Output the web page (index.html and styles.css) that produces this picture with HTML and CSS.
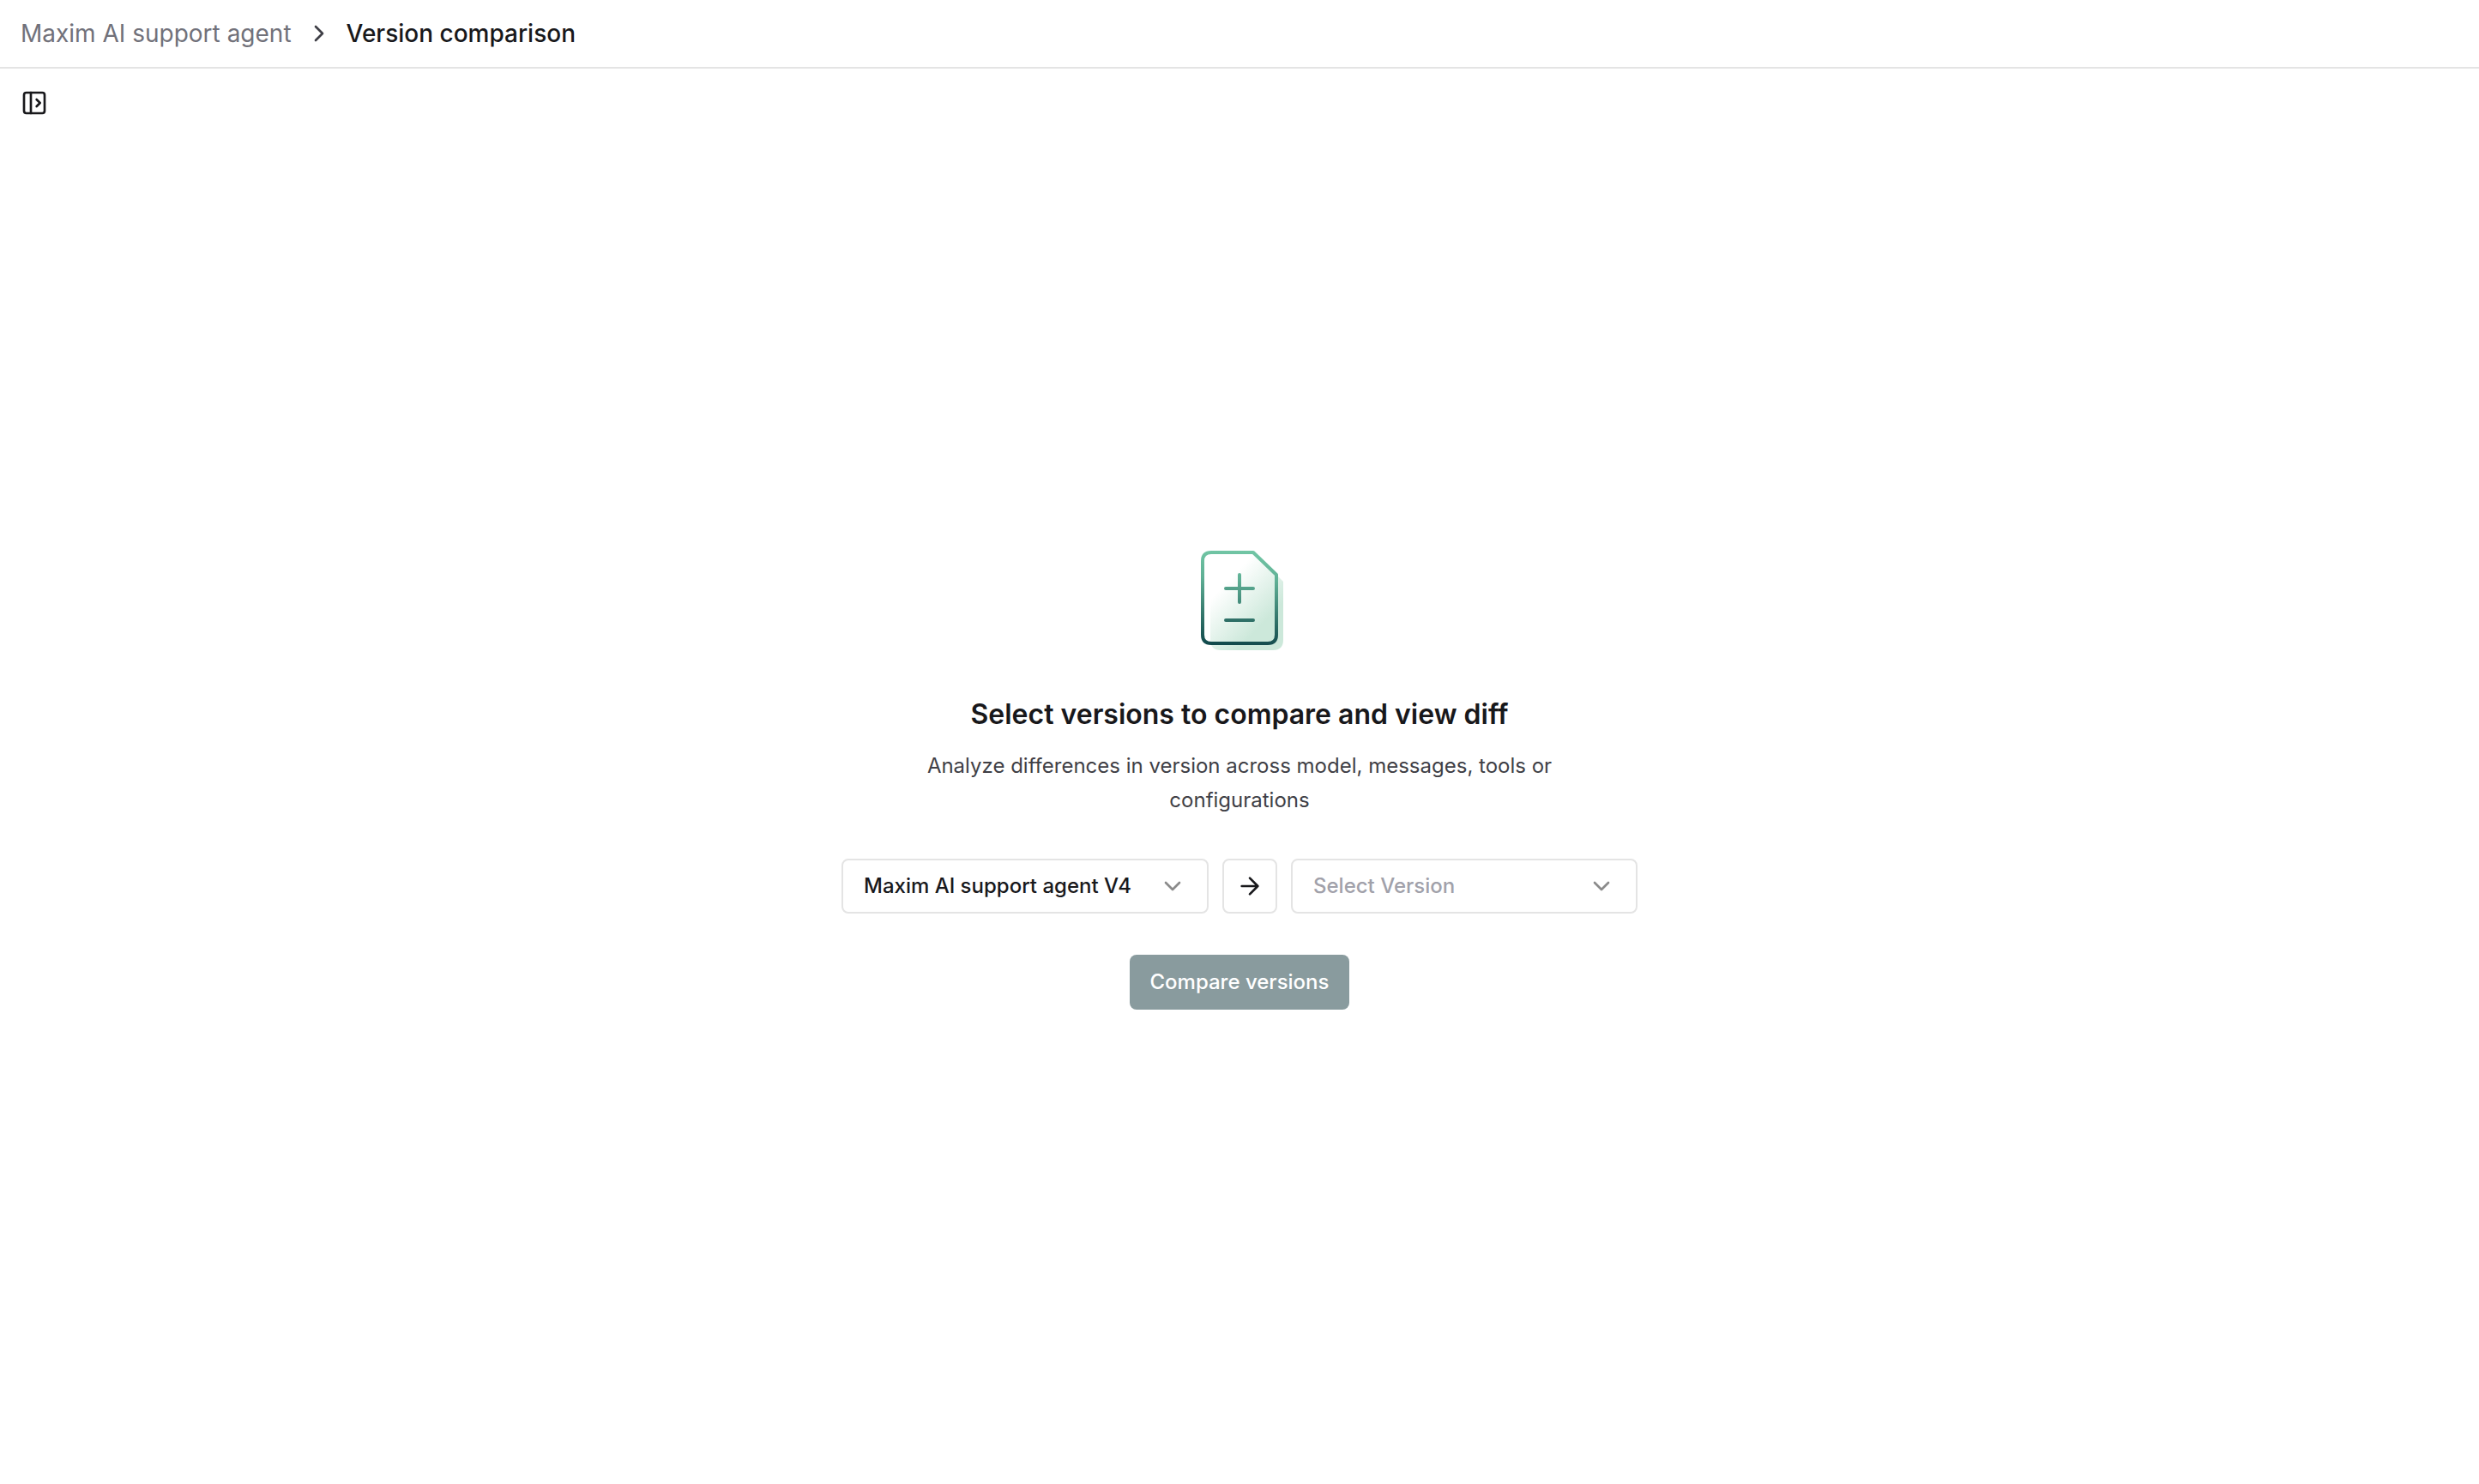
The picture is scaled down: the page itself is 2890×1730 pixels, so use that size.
FILE: index.html
```html
<!DOCTYPE html>
<html lang="en">
<head>
  <meta charset="utf-8">
  <meta name="viewport" content="width=device-width, initial-scale=1">
  <title>Version comparison</title>
  <link rel="stylesheet" href="styles.css">
</head>
<body>
  <header class="topbar">
    <nav class="breadcrumb" aria-label="Breadcrumb">
      <a class="breadcrumb-link" href="#agent">Maxim AI support agent</a>
      <svg class="icon icon-separator" viewBox="0 0 24 24" aria-hidden="true"><path d="m9 18 6-6-6-6"/></svg>
      <span class="breadcrumb-current" aria-current="page">Version comparison</span>
    </nav>
  </header>

  <div class="toolbar">
    <button class="sidebar-toggle" type="button" aria-label="Open sidebar">
      <svg class="icon" viewBox="0 0 24 24" aria-hidden="true"><rect x="3" y="3" width="18" height="18" rx="2"/><path d="M9 3v18M14 9l3 3-3 3"/></svg>
    </button>
  </div>

  <main class="content">
    <form class="compare">
      <svg class="illustration" viewBox="0 1 100 120" aria-hidden="true">
        <defs>
          <linearGradient id="stroke" gradientUnits="userSpaceOnUse" x1="52" y1="2" x2="46" y2="112">
            <stop offset="0" stop-color="#72c6a5"/>
            <stop offset=".3" stop-color="#5fb095"/>
            <stop offset="1" stop-color="#124a4c"/>
          </linearGradient>
          <linearGradient id="fill" gradientUnits="userSpaceOnUse" x1="30" y1="44" x2="76" y2="88">
            <stop offset="0" stop-color="#cce8da" stop-opacity="0"/>
            <stop offset="1" stop-color="#cce8da"/>
          </linearGradient>
        </defs>
        <path fill="url(#fill)" d="M28 8H71L101 38V106Q101 118 89 118H28Q16 118 16 106V20Q16 8 28 8Z"/>
        <g fill="none" stroke="url(#stroke)" stroke-width="4" stroke-linecap="round" stroke-linejoin="round">
          <path d="M17 4H66L93 30V100Q93 110 83 110H17Q7 110 7 100V14Q7 4 17 4Z"/>
          <path d="M50 30V62M34 46H66M34 83H66V83.01"/>
        </g>
      </svg>
      <h1 class="title">Select versions to compare and view diff</h1>
      <p class="description">Analyze differences in version across model, messages, tools or configurations</p>
      <div class="pickers">
        <div class="picker picker-base">
          <select class="picker-select" aria-label="Base version">
            <option>Maxim AI support agent V4</option>
          </select>
          <svg class="icon picker-chevron" viewBox="0 0 24 24" aria-hidden="true"><path d="m6 9 6 6 6-6"/></svg>
        </div>
        <button class="swap" type="button" aria-label="Compare with">
          <svg class="icon" viewBox="0 0 24 24" aria-hidden="true"><path d="M5 12h14M12 5l7 7-7 7"/></svg>
        </button>
        <div class="picker picker-target">
          <select class="picker-select is-empty" aria-label="Version to compare">
            <option>Select Version</option>
          </select>
          <svg class="icon picker-chevron" viewBox="0 0 24 24" aria-hidden="true"><path d="m6 9 6 6 6-6"/></svg>
        </div>
      </div>
      <button class="submit" type="submit" disabled>Compare versions</button>
    </form>
  </main>
</body>
</html>
```
FILE: styles.css
```css
* {
  box-sizing: border-box;
}

body {
  margin: 0;
  min-height: 100vh;
  display: flex;
  flex-direction: column;
  background: #fff;
  color: #18181b;
  font-family: Inter, "Liberation Sans", sans-serif;
  font-size: 24px;
  line-height: 40px;
}

button,
select {
  font: inherit;
  color: inherit;
}

.icon {
  display: block;
  flex: none;
  width: 32px;
  height: 32px;
  fill: none;
  stroke: currentColor;
  stroke-width: 2;
  stroke-linecap: round;
  stroke-linejoin: round;
}

.topbar {
  padding: 19px 24px;
  border-bottom: 2px solid #e4e4e4;
}

.breadcrumb {
  display: flex;
  align-items: center;
  gap: 16px;
  font-size: 28px;
  font-weight: 500;
}

.breadcrumb-link {
  color: #71717a;
  font-weight: 400;
  text-decoration: none;
}

.icon-separator {
  color: #3f3f46;
}

.toolbar {
  padding: 24px;
}

.sidebar-toggle {
  display: block;
  padding: 0;
  border: 0;
  background: none;
}

.content {
  flex: 1;
  display: flex;
  align-items: center;
  justify-content: center;
  padding: 0 24px 72px;
}

.compare {
  display: flex;
  flex-direction: column;
  align-items: center;
  width: 100%;
  max-width: 928px;
}

.illustration {
  width: 100px;
  height: 120px;
  overflow: visible;
}

.title {
  margin: 48px 0 16px;
  font-size: 32px;
  font-weight: 600;
  line-height: 48px;
  text-align: center;
}

.description {
  max-width: 768px;
  margin: 0 0 48px;
  color: #3f3f46;
  text-align: center;
}

.pickers {
  display: flex;
  gap: 16px;
  width: 100%;
  margin-bottom: 48px;
  font-weight: 500;
}

.picker {
  display: grid;
  align-items: center;
  min-width: 0;
}

.picker-base {
  flex: 1 1 428px;
}

.picker-target {
  flex: 1 1 404px;
}

.picker-select,
.picker-chevron {
  grid-area: 1 / 1;
}

.picker-select {
  appearance: none;
  width: 100%;
  height: 64px;
  padding: 0 64px 0 24px;
  border: 2px solid #e4e4e4;
  border-radius: 8px;
  background: #fff;
}

.picker-select.is-empty {
  color: #a1a1aa;
}

.picker-chevron {
  justify-self: end;
  margin-right: 26px;
  color: #8b8b8b;
  pointer-events: none;
}

.swap {
  display: grid;
  place-items: center;
  flex: none;
  width: 64px;
  height: 64px;
  padding: 0;
  border: 2px solid #e4e4e4;
  border-radius: 8px;
  background: #fff;
}

.submit {
  height: 64px;
  padding: 0 24px;
  border: 0;
  border-radius: 8px;
  background: #899b9e;
  color: #fff;
  font-weight: 500;
}
```
